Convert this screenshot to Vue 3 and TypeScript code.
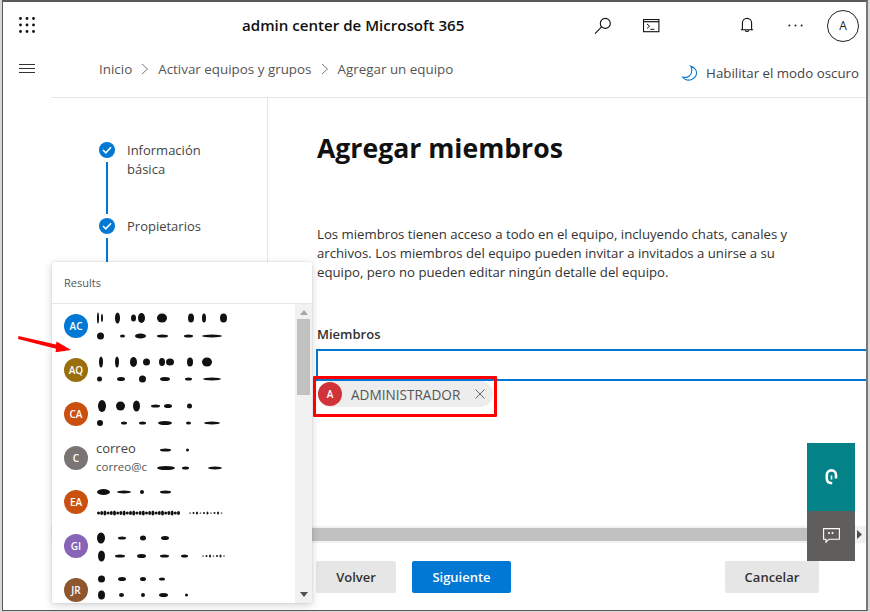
<script setup lang="ts">
interface Blob { x: number; w: number; h: number }
interface Person {
  initials: string
  color: string
  topY: number
  bottomY: number
  top: Blob[]
  bottom: Blob[]
  name?: string
  mail?: string
}

const b = (list: number[][]): Blob[] => list.map(([x, w, h]) => ({ x, w, h }))
const dotted = (start: number, count: number, step: number, w: number, h: number): number[][] =>
  Array.from({ length: count }, (_, i) => [start + i * step, w, h + (i % 3)])

const people: Person[] = [
  { initials: 'AC', color: '#0078d4', topY: 14, bottomY: 32,
    top: b([[1,2,11],[5,2,8],[19,5,11],[35,5,7],[42,7,10],[61,10,9],[92,6,9],[106,4,9],[124,7,9]]),
    bottom: b([[1,7,7],[24,5,3],[39,11,5],[61,11,3],[88,9,3],[106,20,3]]) },
  { initials: 'AQ', color: '#986f0b', topY: 14, bottomY: 31,
    top: b([[3,4,11],[19,4,11],[34,7,10],[47,7,7],[63,6,8],[70,8,7],[91,6,9],[106,10,9]]),
    bottom: b([[1,5,5],[21,8,4],[43,7,7],[64,10,4],[89,7,3],[107,18,3]]) },
  { initials: 'CA', color: '#ca5010', topY: 14, bottomY: 31,
    top: b([[2,8,12],[20,9,9],[37,7,11],[55,9,3],[68,8,4],[91,5,5]]),
    bottom: b([[1,6,6],[25,6,3],[43,7,3],[62,14,4],[90,5,3],[108,16,3]]) },
  { initials: 'C', color: '#7a7574', topY: 14, bottomY: 32, name: 'correo', mail: 'correo@c',
    top: b([[64,11,3],[90,3,3]]),
    bottom: b([[61,18,4],[86,7,3],[112,14,3]]) },
  { initials: 'EA', color: '#ca5010', topY: 12, bottomY: 33,
    top: b([[1,13,6],[21,14,3],[44,4,4],[64,11,3]]),
    bottom: b([...dotted(1, 26, 3.2, 3, 3), ...dotted(93, 10, 3.5, 2, 1)]) },
  { initials: 'GI', color: '#8764b8', topY: 14, bottomY: 32,
    top: b([[1,8,11],[22,8,3],[44,6,5],[65,8,4]]),
    bottom: b([[2,7,11],[19,10,3],[41,9,4],[64,9,3],[85,7,3],...dotted(106, 7, 3.5, 2, 1)]) },
  { initials: 'JR', color: '#8e562e', topY: 11, bottomY: 27,
    top: b([[2,7,7],[22,8,4],[44,6,4],[63,6,3]]),
    bottom: b([[2,7,9],[23,5,4],[45,4,4],[63,9,4],[89,3,3]]) },
]
</script>

<template>
  <div class="screen">
    <div class="window">
      <header class="topbar">
        <svg class="waffle" width="16" height="16" viewBox="0 0 16 16" fill="#111">
          <template v-for="y in [1.5, 8, 14.5]" :key="y">
            <circle v-for="x in [1.5, 8, 14.5]" :key="x" :cx="x" :cy="y" r="1.4" />
          </template>
        </svg>
        <div class="title">admin center de Microsoft 365</div>
        <div class="actions">
          <svg class="act-search" width="18" height="18" viewBox="0 0 18 18" fill="none" stroke="#111" stroke-width="1.1">
            <circle cx="11.3" cy="6.4" r="5" />
            <path d="M7.6 9.9 1 16.7" />
          </svg>
          <svg class="act-term" width="17" height="14" viewBox="0 0 17 14" fill="none" stroke="#111">
            <rect x=".5" y=".5" width="15.4" height="12.2" stroke-width="1.1" />
            <path d="M.5 2.7h15.4" stroke-width="1.2" />
            <path d="m4 5 2.6 2.2L4 9.4M7.4 10.3h4" stroke-width="1" />
          </svg>
          <svg class="act-bell" width="14" height="16" viewBox="0 0 14 16" fill="none" stroke="#111" stroke-width="1.1">
            <path d="M2.4 12.6V6a4.6 4.6 0 0 1 9.2 0v6.6M.8 12.8h12.4" />
            <path d="M5.2 13.2a1.9 1.9 0 0 0 3.6 0" />
          </svg>
          <svg class="act-dots" width="15" height="3" viewBox="0 0 15 3" fill="#222">
            <circle cx="1.4" cy="1.5" r="1" />
            <circle cx="7.5" cy="1.5" r="1" />
            <circle cx="13.6" cy="1.5" r="1" />
          </svg>
          <div class="me">A</div>
        </div>
      </header>

      <div class="shell">
        <nav class="rail">
          <svg width="16" height="9" viewBox="0 0 16 9" stroke="#333" stroke-width="1">
            <path d="M0 .5h16M0 4.5h16M0 8.5h16" />
          </svg>
        </nav>

        <div class="page">
          <div class="crumbs">
            <div class="trail">
              <span>Inicio</span>
              <svg width="8" height="12" viewBox="0 0 8 12" fill="none" stroke="#777"><path d="m1 1 5.5 5L1 11" /></svg>
              <span>Activar equipos y grupos</span>
              <svg width="8" height="12" viewBox="0 0 8 12" fill="none" stroke="#777"><path d="m1 1 5.5 5L1 11" /></svg>
              <span>Agregar un equipo</span>
            </div>
            <div class="dark">
              <svg width="16" height="16" viewBox="0 0 16 16" fill="none" stroke="#0f7ad8" stroke-width="1.1">
                <path d="M8.5 1c5 1.5 7 5.400 5.600 9.200-1.500 4-6.700 6-10.600 4.300-1.400-.6-2.300-1.500-3-2.500 3 1 6.800.2 8.300-2.700C10.200 6.300 10 3.200 8.500 1Z" />
              </svg>
              <span>Habilitar el modo oscuro</span>
            </div>
          </div>

          <div class="wizard">
            <aside class="steps">
              <div class="step step-first">
                <div class="marker">
                  <span class="dot"><svg width="10" height="8" viewBox="0 0 10 8" fill="none" stroke="#fff" stroke-width="1.6"><path d="m1 4 2.800 2.800L9 1.300" /></svg></span>
                  <span class="line"></span>
                </div>
                <div class="label">Información básica</div>
              </div>
              <div class="step">
                <div class="marker">
                  <span class="dot"><svg width="10" height="8" viewBox="0 0 10 8" fill="none" stroke="#fff" stroke-width="1.6"><path d="m1 4 2.800 2.800L9 1.300" /></svg></span>
                  <span class="line"></span>
                </div>
                <div class="label">Propietarios</div>
              </div>
            </aside>

            <main class="content">
              <h1>Agregar miembros</h1>
              <p>Los miembros tienen acceso a todo en el equipo, incluyendo chats, canales y archivos. Los miembros del equipo pueden invitar a invitados a unirse a su equipo, pero no pueden editar ningún detalle del equipo.</p>
              <div class="field-label">Miembros</div>
              <div class="input"></div>
              <div class="chip">
                <span class="chip-avatar">A</span>
                <span class="chip-name">ADMINISTRADOR</span>
                <svg width="10" height="10" viewBox="0 0 10 10" stroke="#666" stroke-width="1"><path d="m.5.5 9 9M9.500.5l-9 9" /></svg>
              </div>
            </main>
          </div>

          <div class="hscroll">
            <div class="hthumb"></div>
            <svg width="5" height="9" viewBox="0 0 5 9" fill="#505050"><path d="M0 0v9l5-4.500z" /></svg>
          </div>

          <footer class="footer">
            <button class="btn">Volver</button>
            <button class="btn primary">Siguiente</button>
            <button class="btn cancel">Cancelar</button>
          </footer>
        </div>
      </div>
    </div>

    <section class="results">
      <div class="results-head">Results</div>
      <div class="results-body">
        <ul class="people">
          <li v-for="p in people" :key="p.initials" class="person">
            <span class="avatar" :style="{ background: p.color }">{{ p.initials }}</span>
            <div class="who">
              <template v-if="p.name">
                <div class="who-name">{{ p.name }}</div>
                <div class="who-mail">{{ p.mail }}</div>
              </template>
              <svg class="smudge" width="140" height="44" viewBox="0 0 140 44" fill="#111">
                <ellipse v-for="(s, i) in p.top" :key="'t' + i" :cx="s.x + s.w / 2" :cy="p.topY" :rx="s.w / 2" :ry="s.h / 2" />
                <ellipse v-for="(s, i) in p.bottom" :key="'b' + i" :cx="s.x + s.w / 2" :cy="p.bottomY" :rx="s.w / 2" :ry="s.h / 2" />
              </svg>
            </div>
          </li>
        </ul>
        <div class="vscroll">
          <svg width="8" height="5" viewBox="0 0 8 5" fill="#a6a6a6"><path d="M4 0 8 5H0z" /></svg>
          <div class="vthumb"></div>
          <svg class="vdown" width="8" height="5" viewBox="0 0 8 5" fill="#505050"><path d="M0 0h8L4 5z" /></svg>
        </div>
      </div>
    </section>

    <svg class="arrow" width="56" height="18" viewBox="0 0 56 18" fill="#f00">
      <path d="M.5 0 38 8.600l.6-3L53 14l-15.500 2.200.5-3.400L0 3z" />
    </svg>
    <div class="highlight"></div>

    <div class="fab fab-help">
      <svg width="13" height="16" viewBox="0 0 13 16" fill="none" stroke="#fff" stroke-width="2.600">
        <path d="M11 9.500V6a4.600 4.600 0 0 0-9.200 0v3.500c0 2.700 2 4.600 5.400 4.800" />
        <path d="M6.500 6.500v4" stroke-width="1.600" />
      </svg>
    </div>
    <div class="fab fab-chat">
      <svg width="17" height="17" viewBox="0 0 17 17" fill="none" stroke="#fff" stroke-width="1.100">
        <path d="M.6.6h15.800v10.600H6l-3 3v-3H.6z" />
        <path d="M6 4v2M9.500 4v2" stroke-width="1.600" />
      </svg>
    </div>
  </div>
</template>

<style scoped>
.screen {
  position: relative;
  width: 870px;
  height: 612px;
  overflow: hidden;
  background: #d8d8d8;
  font-family: "Open Sans", "Noto Sans", sans-serif;
  color: #323130;
}
.window {
  box-sizing: border-box;
  width: 866px;
  height: 611px;
  margin-left: 2px;
  background: #fff;
  border: 1px solid #5a5a5a;
  border-top-width: 2px;
  border-right-width: 2px;
  border-right-color: #777;
  display: flex;
  flex-direction: column;
}
.topbar {
  flex: 0 0 47px;
  display: flex;
  align-items: center;
  padding-left: 16px;
}
.waffle { margin-top: -2px; }
.title {
  margin-left: 207px;
  margin-top: -2px;
  font-size: 15.1px;
  font-weight: 600;
  color: #111;
  white-space: nowrap;
}
.actions {
  margin-left: auto;
  display: flex;
  align-items: center;
  padding-right: 7px;
}
.act-search { margin-right: 31px; }
.act-term { margin-right: 80px; }
.act-bell { margin-right: 34px; margin-top: -1px; }
.act-dots { margin-right: 24px; margin-top: -1px; }
.me {
  box-sizing: border-box;
  width: 32px;
  height: 32px;
  border: 1px solid #222;
  border-radius: 50%;
  display: flex;
  align-items: center;
  justify-content: center;
  font-size: 12px;
  color: #222;
}
.shell { flex: 1; display: flex; min-height: 0; }
.rail {
  flex: 0 0 48px;
  box-sizing: border-box;
  padding: 15px 0 0 16px;
}
.rail svg { display: block; }
.page {
  flex: 1;
  min-width: 0;
  display: flex;
  flex-direction: column;
}
.crumbs {
  flex: 0 0 48px;
  box-sizing: border-box;
  border-bottom: 1px solid #e6e6e6;
  display: flex;
  padding-left: 48px;
  padding-right: 7px;
  justify-content: space-between;
  font-size: 13.3px;
  color: #555;
}
.trail {
  display: flex;
  align-items: center;
  gap: 8px;
  height: 40px;
  font-size: 13.4px;
}
.trail svg { margin: 0 1px; }
.dark {
  display: flex;
  align-items: center;
  gap: 8px;
  height: 48px;
  color: #444;
}
.wizard { flex: 1; display: flex; min-height: 0; }
.steps {
  flex: 0 0 217px;
  box-sizing: border-box;
  border-right: 1px solid #e6e6e6;
  padding: 44px 0 0 48px;
}
.step { display: flex; gap: 12px; min-height: 52px; }
.step-first { height: 76px; }
.marker {
  display: flex;
  flex-direction: column;
  align-items: center;
  width: 16px;
  height: 100%;
}
.step:last-child .marker { height: 60px; }
.dot {
  flex: none;
  width: 16px;
  height: 16px;
  border-radius: 50%;
  background: #0078d4;
  display: flex;
  align-items: center;
  justify-content: center;
}
.line { width: 2px; flex: 1; margin-top: 4px; margin-bottom: 4px; background: #0078d4; }
.label {
  width: 100px;
  font-size: 13px;
  line-height: 19px;
  color: #444;
  margin-top: -1px;
}
.content {
  flex: 1;
  min-width: 0;
  overflow: hidden;
  padding: 32px 0 0 49px;
}
h1 {
  margin: 0;
  font-size: 26.6px;
  line-height: 36px;
  font-weight: 700;
  color: #111;
}
p {
  margin: 59px 0 0;
  width: 490px;
  font-size: 13.2px;
  line-height: 19px;
  color: #323130;
}
.field-label {
  margin-top: 43px;
  font-size: 13px;
  line-height: 19px;
  font-weight: 600;
}
.input {
  box-sizing: border-box;
  margin: 5px 0 0 -1px;
  width: 600px;
  height: 32px;
  border: 2px solid #0078d4;
}
.chip {
  box-sizing: border-box;
  margin: 0 0 0 1px;
  width: 175px;
  height: 26px;
  border-radius: 13px;
  background: #ededed;
  display: flex;
  align-items: center;
  font-size: 13.6px;
  color: #555;
}
.chip svg { margin-left: 10px; }
.chip-avatar {
  flex: none;
  width: 24px;
  height: 24px;
  border-radius: 50%;
  background: #d13438;
  color: #fff;
  font-size: 10px;
  font-weight: 600;
  display: flex;
  align-items: center;
  justify-content: center;
}
.chip-name { margin-left: 9px; width: 114px; white-space: nowrap; }
.hscroll {
  flex: 0 0 17px;
  background: #f1f1f1;
  display: flex;
  align-items: center;
  padding: 0 4px 0 216px;
  gap: 3px;
  box-sizing: border-box;
}
.hthumb { flex: 1; height: 13px; background: #c1c1c1; }
.footer {
  flex: 0 0 67px;
  box-sizing: border-box;
  display: flex;
  align-items: flex-start;
  padding: 18px 47px 0 265px;
  gap: 16px;
}
.btn {
  height: 32px;
  width: 80px;
  border: 0;
  border-radius: 2px;
  background: #e6e6e6;
  color: #323130;
  font-family: inherit;
  font-size: 13px;
  font-weight: 600;
  padding: 0;
}
.primary { width: 99px; background: #0078d4; color: #fff; }
.cancel { width: 94px; margin-left: auto; }
.results {
  position: absolute;
  left: 52px;
  top: 262px;
  width: 260px;
  height: 341px;
  background: #fff;
  border-radius: 2px;
  box-shadow: 0 2px 8px rgba(0, 0, 0, .18), 0 0 2px rgba(0, 0, 0, .12);
  display: flex;
  flex-direction: column;
  overflow: hidden;
}
.results-head {
  flex: 0 0 41px;
  box-sizing: border-box;
  border-bottom: 1px solid #e6e6e6;
  padding-left: 12px;
  font-size: 11px;
  line-height: 41px;
  color: #555;
}
.results-body { flex: 1; min-height: 0; display: flex; }
.people {
  flex: 1;
  list-style: none;
  margin: 0;
  padding: 0;
  min-width: 0;
  overflow: hidden;
}
.person {
  height: 44px;
  padding-left: 12px;
  display: flex;
  align-items: center;
  gap: 8px;
}
.avatar {
  flex: none;
  width: 24px;
  height: 24px;
  border-radius: 50%;
  color: #fff;
  font-size: 10px;
  font-weight: 600;
  display: flex;
  align-items: center;
  justify-content: center;
}
.who { position: relative; height: 44px; flex: 1; }
.who-name {
  position: absolute;
  left: 0;
  top: 3px;
  font-size: 13px;
  line-height: 18px;
  color: #444;
}
.who-mail {
  position: absolute;
  left: 0;
  top: 23px;
  font-size: 11.5px;
  line-height: 16px;
  color: #555;
}
.smudge { display: block; filter: blur(.75px); }
.vscroll {
  flex: 0 0 17px;
  background: #f1f1f1;
  display: flex;
  flex-direction: column;
  align-items: center;
  padding-top: 6px;
  box-sizing: border-box;
}
.vthumb { width: 13px; height: 76px; margin-top: 4px; background: #c1c1c1; }
.vdown { margin-top: auto; margin-bottom: 6px; }
.arrow { position: absolute; left: 18px; top: 336px; }
.highlight {
  position: absolute;
  left: 313px;
  top: 376px;
  width: 184px;
  height: 41px;
  box-sizing: border-box;
  border: 3px solid #f00;
  border-radius: 1px;
}
.fab {
  position: absolute;
  left: 807px;
  width: 48px;
  display: flex;
  align-items: center;
  justify-content: center;
}
.fab-help { top: 443px; height: 68px; background: #038387; }
.fab-chat { top: 511px; height: 50px; background: #605e5c; }
</style>

<style>
body { margin: 0; }
</style>
